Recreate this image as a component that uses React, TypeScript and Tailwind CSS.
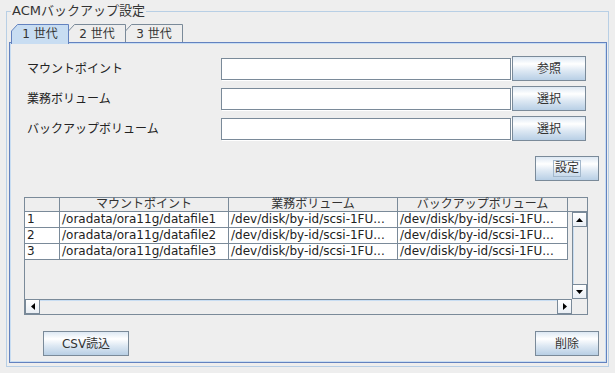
import React from 'react';

const btnBg =
  'bg-[linear-gradient(to_bottom,#dde8f3,#ffffff_30%,#dde8f3_60%,#b8cfe5)]';

const Button = ({
  label,
  className = '',
  focus = false,
}: {
  label: string;
  className?: string;
  focus?: boolean;
}) => (
  <button
    className={`h-[25px] border border-[#7a8a99] ${btnBg} flex items-center justify-center text-[12px] text-[#333333] ${className}`}
  >
    {focus ? (
      <span className="border border-[#a3b8cc] px-px leading-[15px]">{label}</span>
    ) : (
      label
    )}
  </button>
);

const Tab = ({ label, selected, first }: { label: string; selected?: boolean; first?: boolean }) => (
  <div
    className={`relative w-[58px] ${selected ? 'h-[20px] z-10' : 'h-[18px]'} ${first ? '' : '-ml-px'} flex justify-center`}
  >
    <svg className="absolute left-0 top-0" width="58" height={selected ? 20 : 18}>
      <path
        d={`M0.5 ${selected ? 20 : 18} V7 L6.5 0.5 H57.5 V${selected ? 20 : 18}`}
        fill={selected ? '#c8ddf2' : '#eeeeee'}
        stroke={selected ? '#6382bf' : '#7a8a99'}
      />
    </svg>
    <span className="relative mt-[2px] text-[12px] leading-[16px] text-[#333333]">{label}</span>
  </div>
);

const Arrow = ({ dir }: { dir: 'up' | 'down' | 'left' | 'right' }) => {
  const pts = {
    up: '3.5,0 7,4 0,4',
    down: '0,0 7,0 3.5,4',
    left: '4,0 4,7 0,3.5',
    right: '0,0 4,3.5 0,7',
  }[dir];
  const vert = dir === 'up' || dir === 'down';
  return (
    <svg width={vert ? 7 : 4} height={vert ? 4 : 7}>
      <polygon points={pts} fill="#000000" />
    </svg>
  );
};

const ScrollBtn = ({ dir, className = '' }: { dir: 'up' | 'down' | 'left' | 'right'; className?: string }) => (
  <div
    className={`w-[15px] h-[15px] shrink-0 border border-[#7a8a99] bg-[linear-gradient(to_bottom,#ffffff,#e9eef4)] flex items-center justify-center ${className}`}
  >
    <Arrow dir={dir} />
  </div>
);

const cols = [35, 169, 169, 170];
const colW = ['w-[35px]', 'w-[169px]', 'w-[169px]', 'w-[170px]'];

const rows = [
  ['1', '/oradata/ora11g/datafile1', '/dev/disk/by-id/scsi-1FU...', '/dev/disk/by-id/scsi-1FU...'],
  ['2', '/oradata/ora11g/datafile2', '/dev/disk/by-id/scsi-1FU...', '/dev/disk/by-id/scsi-1FU...'],
  ['3', '/oradata/ora11g/datafile3', '/dev/disk/by-id/scsi-1FU...', '/dev/disk/by-id/scsi-1FU...'],
];

const headers = ['', 'マウントポイント', '業務ボリューム', 'バックアップボリューム'];

const fields = [
  { label: 'マウントポイント', button: '参照' },
  { label: '業務ボリューム', button: '選択' },
  { label: 'バックアップボリューム', button: '選択' },
];

export default function App() {
  return (
    <div className="w-[615px] h-[373px] overflow-hidden bg-[#eeeeee] pt-[3px] font-['DejaVu_Sans','Noto_Sans_CJK_JP',sans-serif] text-[#333333]">
      <fieldset className="ml-[6px] w-[603px] h-[364px] border border-[#b8cfe5] pl-[2px] pr-px">
        <legend className="ml-[2px] px-px text-[13px] leading-[16px] text-[#333333]">
          ACMバックアップ設定
        </legend>

        <div className="relative z-10 mt-[5px] ml-[2px] flex h-[18px] items-start">
          <Tab label="1 世代" selected first />
          <Tab label="2 世代" />
          <Tab label="3 世代" />
        </div>

        <div className="h-[321px] border border-[#6382bf]">
          <div className="flex h-full flex-col border border-[#c8ddf2]">
            {/* input rows */}
            <div className="flex flex-col gap-[5px] pt-3 pl-4 pr-[18px]">
              {fields.map((f) => (
                <div key={f.label} className="flex h-[25px] items-center">
                  <span className="w-[194px] text-[12px] text-[#222222]">{f.label}</span>
                  <input
                    type="text"
                    className="h-[22px] w-[290px] border border-[#7a8a99] bg-white shadow-[1px_1px_0_#ffffff] outline-none"
                  />
                  <Button label={f.button} className="ml-px w-[74px]" />
                </div>
              ))}
            </div>

            <div className="mt-[15px] flex justify-end pr-[6px]">
              <Button label="設定" focus className="w-[64px]" />
            </div>

            {/* table */}
            <div className="mt-4 ml-[13px] flex h-[118px] w-[564px] flex-col border border-[#7a8a99]">
              <div className="flex h-[14px] shrink-0 border-b border-[#7a8a99] bg-[#eeeeee]">
                {headers.map((h, i) => (
                  <div
                    key={i}
                    className={`${colW[i]} shrink-0 border-r border-[#7a8a99] text-center text-[12px] leading-[13px] text-[#333333]`}
                  >
                    {h}
                  </div>
                ))}
              </div>
              <div className="flex min-h-0 flex-1">
                <div className="flex w-[547px] flex-col">
                  {rows.map((r) => (
                    <div key={r[0]} className="flex h-[16px] shrink-0">
                      {r.map((c, i) => (
                        <div
                          key={i}
                          style={{ width: cols[i] }}
                          className="shrink-0 overflow-hidden whitespace-nowrap border-r border-b border-[#7a8a99] bg-white pl-[2px] text-[12px] leading-[15px] text-[#222222]"
                        >
                          {c}
                        </div>
                      ))}
                    </div>
                  ))}
                </div>
                <div className="flex w-[15px] flex-col">
                  <ScrollBtn dir="up" />
                  <div className="flex-1 border-l border-[#7a8a99] bg-[#eeeeee] shadow-[inset_1px_0_0_#c8ddf2]" />
                  <ScrollBtn dir="down" />
                </div>
              </div>
              <div className="flex h-[15px] shrink-0">
                <div className="flex w-[547px]">
                  <ScrollBtn dir="left" />
                  <div className="flex-1 border-t border-[#7a8a99] bg-[#eeeeee] shadow-[inset_0_1px_0_#c8ddf2]" />
                  <ScrollBtn dir="right" />
                </div>
                <div className="flex-1 bg-[#eeeeee]" />
              </div>
            </div>

            <div className="mt-4 flex justify-between pl-[32px] pr-[6px]">
              <Button label="CSV読込" className="w-[86px]" />
              <Button label="削除" className="w-[64px]" />
            </div>
          </div>
        </div>
      </fieldset>
    </div>
  );
}
